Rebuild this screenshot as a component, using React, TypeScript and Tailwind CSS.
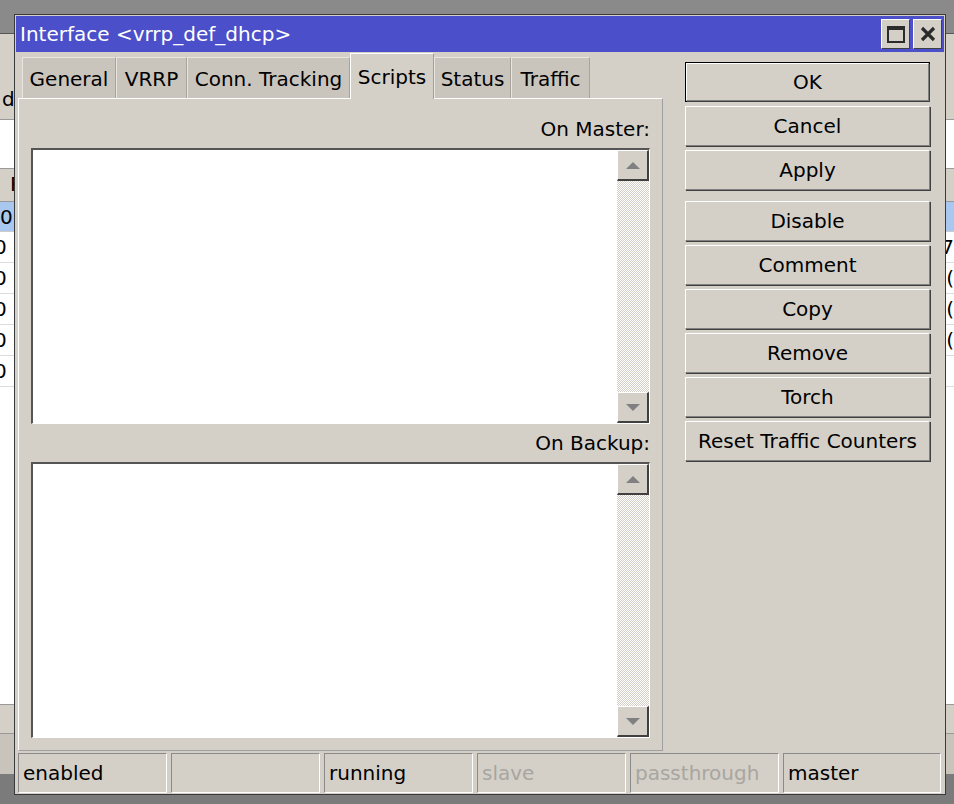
import React from 'react';

const font = { fontFamily: '"DejaVu Sans", Verdana, sans-serif' };

const tabs = [
  { label: 'General', w: 'w-[94px]' },
  { label: 'VRRP', w: 'w-[71px]' },
  { label: 'Conn. Tracking', w: 'w-[163px]' },
  { label: 'Scripts', w: 'w-[84px]', active: true },
  { label: 'Status', w: 'w-[77px]' },
  { label: 'Traffic', w: 'w-[79px]' },
];

const status = [
  { text: 'enabled' },
  { text: '' },
  { text: 'running' },
  { text: 'slave', dim: true },
  { text: 'passthrough', dim: true },
  { text: 'master' },
];

function Arrow({ up }: { up?: boolean }) {
  return (
    <svg width="16" height="9" viewBox="0 0 16 9">
      {up ? <path d="M1 8 L8 1 L15 8 Z" fill="#808080" /> : <path d="M1 1 L8 8 L15 1 Z" fill="#808080" />}
    </svg>
  );
}

function ScrollButton({ up }: { up?: boolean }) {
  return (
    <div className="h-[31px] w-full flex items-center justify-center bg-[#d4d0c8] border-t border-l border-t-white border-l-white border-r-2 border-b-2 border-r-[#404040] border-b-[#404040]">
      <Arrow up={up} />
    </div>
  );
}

function ScriptBox() {
  return (
    <div className="h-[276px] flex border-t-2 border-l-2 border-t-[#555] border-l-[#555] border-r border-b border-r-white border-b-white bg-white">
      <div className="flex-1" />
      <div className="w-[32px] flex flex-col bg-[repeating-conic-gradient(#ffffff_0_25%,#d4d0c8_0_50%)] bg-[length:2px_2px]">
        <ScrollButton up />
        <div className="flex-1" />
        <ScrollButton />
      </div>
    </div>
  );
}

function SideButton({ label, primary }: { label: string; primary?: boolean }) {
  return (
    <div className={`h-[40px] ${primary ? 'border border-black' : ''}`}>
      <div className="h-full flex items-center justify-center text-[20px] text-black bg-[#d4d0c8] border-t border-l border-t-white border-l-white border-r border-b border-r-[#808080] border-b-[#808080] shadow-[1px_1px_0_#404040]">
        {label}
      </div>
    </div>
  );
}

function BackgroundWindow() {
  const rows = ['0', '0', '0', '0', '0'];
  return (
    <div className="absolute left-0 right-0 top-[33px] bottom-[30px] flex flex-col bg-[#d4d0c8] border-t border-[#555] text-[20px]">
      <div className="h-[50px]" />
      <div className="h-[35px] px-[2px] text-black leading-[30px]">di</div>
      <div className="flex-1 flex flex-col bg-white border-t border-[#999]">
        <div className="h-[34px] mt-[48px] bg-[#d4d0c8] border-y border-[#999] pl-[10px]">P</div>
        <div className="h-[30px] bg-[#a8c8f0] border-b border-[#ccc] pl-[0px] leading-[30px]">0</div>
        {rows.map((r, i) => (
          <div key={i} className="h-[31px] border-b border-[#ddd] leading-[30px] flex justify-between">
            <span className="-ml-[6px]">{r}</span>
            <span className="pr-[0px]">{i === 0 ? '7' : i < 4 ? '(' : ''}</span>
          </div>
        ))}
        <div className="flex-1" />
        <div className="h-[30px] bg-[#d4d0c8] border-y border-[#999]" />
        <div className="h-[40px] bg-[#c8c4bc]" />
      </div>
    </div>
  );
}

export default function App() {
  return (
    <div className="relative w-[954px] h-[804px] bg-[#7b7b7b] overflow-hidden" style={font}>
      <div className="absolute left-0 right-0 top-0 h-[33px] bg-[#8a8a8a]" />
      <BackgroundWindow />

      <div className="absolute left-[14px] top-[14px] w-[932px] h-[781px] flex flex-col bg-[#d4d0c8] border border-[#3a3a3a]">
        {/* title bar */}
        <div className="mt-[1px] mx-[1px] h-[36px] bg-[#4b4fc9] flex items-center justify-between pl-[4px] pr-[2px]">
          <span className="text-white text-[20px] leading-none">Interface &lt;vrrp_def_dhcp&gt;</span>
          <div className="flex gap-[3px]">
            <div className="w-[29px] h-[30px] bg-[#d4d0c8] flex items-center justify-center border-t border-l border-white border-r border-b border-r-[#404040] border-b-[#404040]">
              <div className="w-[18px] h-[17px] border-2 border-t-[4px] border-[#2b2b2b]" />
            </div>
            <div className="w-[29px] h-[30px] bg-[#d4d0c8] flex items-center justify-center border-t border-l border-white border-r border-b border-r-[#404040] border-b-[#404040]">
              <svg width="18" height="16" viewBox="0 0 18 16">
                <path d="M3 2 L15 14 M15 2 L3 14" stroke="#2b2b2b" strokeWidth="3.2" />
              </svg>
            </div>
          </div>
        </div>

        {/* body */}
        <div className="flex-1 flex pl-[3px] pr-[15px]">
          <div className="w-[645px] flex flex-col">
            <div className="h-[46px] flex items-end pl-[4px]">
              {tabs.map((t) =>
                t.active ? (
                  <div
                    key={t.label}
                    className={`${t.w} h-[46px] -mb-[1px] relative z-10 bg-[#d4d0c8] border-t border-l border-white border-r border-r-[#a0a0a0] flex items-start justify-center pt-[8px] text-[20px] text-black`}
                  >
                    {t.label}
                  </div>
                ) : (
                  <div
                    key={t.label}
                    className={`${t.w} h-[41px] bg-[#c9c5bd] border-t border-l border-t-[#e8e6e0] border-l-[#e8e6e0] border-r border-r-[#a8a49c] flex items-center justify-center pt-[2px] text-[20px] text-black`}
                  >
                    {t.label}
                  </div>
                ),
              )}
            </div>
            <div className="h-[653px] flex flex-col border-t border-l border-white border-r border-b border-r-[#a0a0a0] border-b-[#a0a0a0] px-[12px] pt-[11px]">
              <div className="h-[38px] flex items-center justify-end text-[20px] text-black pr-[0px]">On Master:</div>
              <ScriptBox />
              <div className="h-[38px] flex items-center justify-end text-[20px] text-black">On Backup:</div>
              <ScriptBox />
            </div>
          </div>

          <div className="ml-[22px] mt-[10px] w-[245px] flex flex-col">
            <div className="flex flex-col gap-[4px]">
              <SideButton label="OK" primary />
              <SideButton label="Cancel" />
              <SideButton label="Apply" />
            </div>
            <div className="mt-[11px] flex flex-col gap-[4px]">
              <SideButton label="Disable" />
              <SideButton label="Comment" />
              <SideButton label="Copy" />
              <SideButton label="Remove" />
              <SideButton label="Torch" />
              <SideButton label="Reset Traffic Counters" />
            </div>
          </div>
        </div>

        {/* status bar */}
        <div className="h-[40px] mb-[1px] flex gap-[4px] pl-[3px] pr-[4px]">
          {status.map((s, i) => (
            <div
              key={i}
              className={`${i === 5 ? 'flex-1' : 'w-[149px]'} h-full flex items-center pl-[4px] text-[20px] border-t border-l border-t-[#8a8a8a] border-l-[#8a8a8a] border-r border-b border-r-white border-b-white ${s.dim ? 'text-[#a8a6a0]' : 'text-black'}`}
            >
              {s.text}
            </div>
          ))}
        </div>
      </div>
    </div>
  );
}
